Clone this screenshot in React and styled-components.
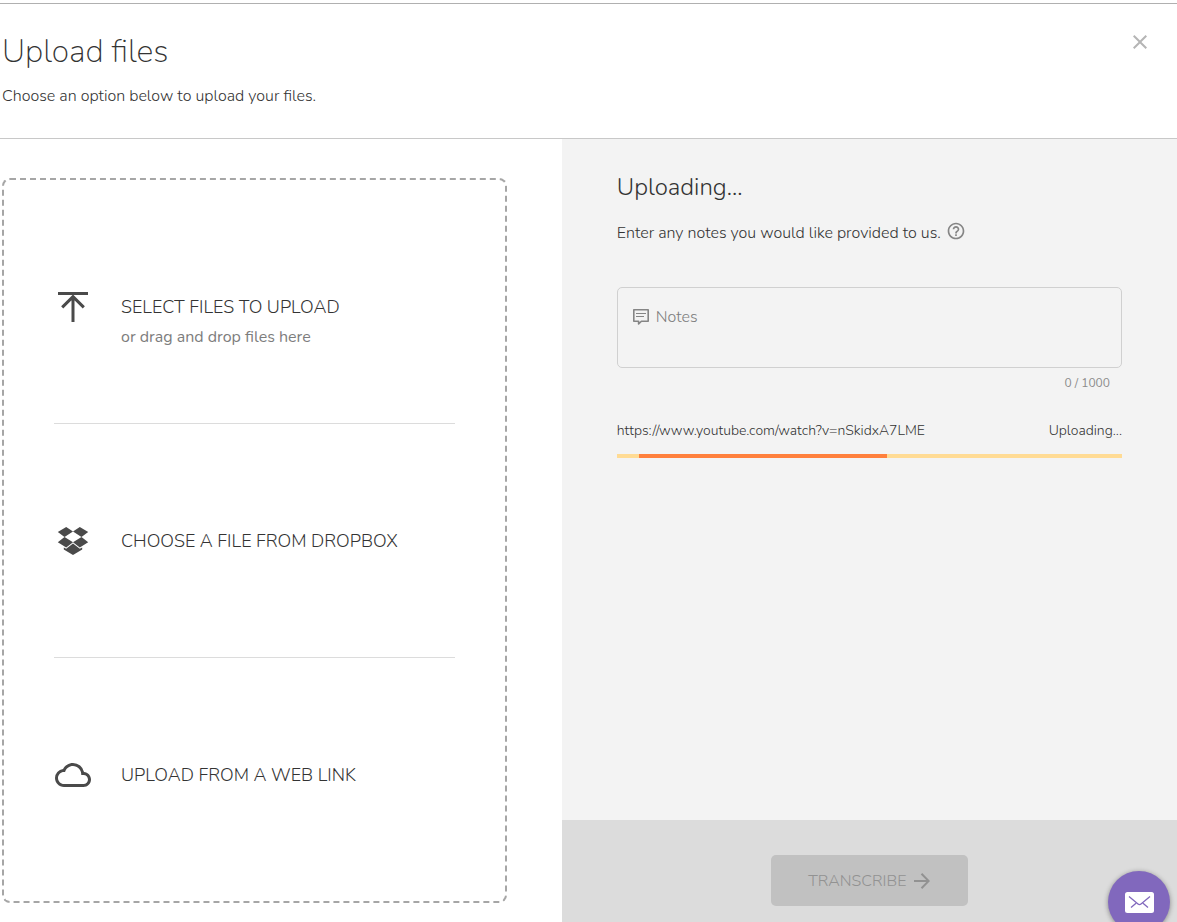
import React, { useState } from "react";
import styled, { createGlobalStyle } from "styled-components";
import { MdClose, MdHelpOutline, MdCloudQueue } from "react-icons/md";

const colors = {
    text: "#333333",
    muted: "#7d7d7d",
    icon: "#4a4a4a",
    line: "#c8c8c8",
    panel: "#f3f3f3",
    footer: "#dcdcdc",
    disabled: "#c1c1c1",
    disabledText: "#929292",
    track: "#ffdb94",
    bar: "#ff803c",
    chat: "#8168bd",
};

const MAX_NOTES = 1000;

const GlobalStyle = createGlobalStyle`
    *, *::before, *::after {
        box-sizing: border-box;
    }

    body {
        margin: 0;
        background: #ffffff;
        color: ${colors.text};
        font-family: Nunito, Lato, "Open Sans", sans-serif;
        font-size: 16px;
        font-weight: 300;
        line-height: 24px;
    }

    button, textarea {
        font: inherit;
        color: inherit;
    }

    svg {
        display: block;
        flex: none;
    }
`;

const Page = styled.div`
    display: flex;
    flex-direction: column;
    min-height: 100vh;
    padding-top: 3px;
`;

const Header = styled.header`
    display: flex;
    justify-content: space-between;
    align-items: flex-start;
    padding: 24px 25px 30px 2px;
    border-top: 1px solid #b0b0b0;
    border-bottom: 1px solid ${colors.line};
`;

const Title = styled.h1`
    margin: 0 0 8px;
    font-size: 32px;
    font-weight: 200;
    line-height: 48px;
`;

const Text = styled.p`
    margin: 0;
`;

const IconButton = styled.button`
    display: flex;
    padding: 0;
    border: 0;
    background: none;
    color: ${(props) => props.$color};
    cursor: pointer;
`;

const CloseButton = styled(IconButton)`
    margin-top: 2px;
`;

const Columns = styled.main`
    flex: 1;
    display: grid;
    grid-template-columns: minmax(0, 21fr) minmax(0, 23fr);
`;

const Sources = styled.section`
    display: flex;
    padding: 39px 55px 19px 2px;
`;

const DropZone = styled.div`
    flex: 1;
    display: flex;
    flex-direction: column;
    padding: 10px 50px;
    border: 2px dashed #a6a6a6;
    border-radius: 8px;
`;

const Option = styled.button`
    flex: 1 1 0;
    display: grid;
    grid-template-columns: 38px 1fr;
    grid-template-rows: 1fr auto 1fr;
    column-gap: 29px;
    padding: 0;
    border: 0;
    border-bottom: 1px solid #dcdcdc;
    background: none;
    text-align: left;
    cursor: pointer;

    &:last-child {
        border-bottom: 0;
    }
`;

const OptionIcon = styled.span`
    grid-row: 2;
    display: flex;
    align-items: center;
    justify-content: center;
    height: 36px;
    color: ${colors.icon};
`;

const OptionTitle = styled.span`
    grid-row: 2;
    align-self: center;
    font-size: 18px;
    text-transform: uppercase;
`;

const OptionHint = styled.span`
    grid-area: 3 / 2;
    color: ${colors.muted};
    font-weight: 400;
`;

const Panel = styled.section`
    display: flex;
    flex-direction: column;
    background: ${colors.panel};
`;

const PanelBody = styled.div`
    flex: 1;
    padding: 32px 55px;
`;

const PanelTitle = styled.h2`
    margin: 0 0 18px;
    font-size: 24px;
    font-weight: 300;
    line-height: 32px;
`;

const NotesIntro = styled.div`
    display: flex;
    align-items: flex-start;
    gap: 5px;
    margin-bottom: 42px;
`;

const NotesBox = styled.label`
    display: flex;
    gap: 6px;
    height: 81px;
    padding: 17px 14px;
    border: 1px solid #d0d0d0;
    border-radius: 5px;
    color: #858585;

    & svg {
        margin-top: 3px;
    }
`;

const NotesInput = styled.textarea`
    flex: 1;
    padding: 0;
    border: 0;
    outline: 0;
    background: none;
    color: ${colors.text};
    resize: none;

    &::placeholder {
        color: ${colors.muted};
        opacity: 1;
    }
`;

const Counter = styled.div`
    padding: 5px 12px 0 0;
    color: #8a8a8a;
    font-size: 12px;
    font-weight: 400;
    line-height: 20px;
    text-align: right;
`;

const UploadRow = styled.div`
    display: flex;
    justify-content: space-between;
    margin-top: 26px;
    font-size: 14px;
`;

const Track = styled.div`
    height: 4px;
    margin-top: 11px;
    background: ${colors.track};
`;

const Bar = styled.div`
    height: 100%;
    background: ${colors.bar};
`;

const Footer = styled.footer`
    display: flex;
    justify-content: center;
    padding: 35px 55px 16px;
    background: ${colors.footer};
`;

const SubmitButton = styled.button`
    display: flex;
    align-items: center;
    justify-content: center;
    gap: 8px;
    width: 197px;
    height: 51px;
    border: 0;
    border-radius: 5px;
    background: ${colors.disabled};
    color: ${colors.disabledText};
    text-transform: uppercase;
`;

const ChatButton = styled.button`
    position: fixed;
    right: 7px;
    bottom: -11px;
    display: flex;
    align-items: center;
    justify-content: center;
    width: 62px;
    height: 62px;
    padding: 0;
    border: 0;
    border-radius: 50%;
    background: ${colors.chat};
    box-shadow: 0 1px 5px rgba(0, 0, 0, 0.4);
    cursor: pointer;
`;

const UploadIcon = () => (
    <svg width="36" height="36" viewBox="0 0 36 36" fill="none" stroke="currentColor" strokeWidth="3">
        <path d="M3 4.5h30M18 33V8M7.2 18.4 18 7.6l10.8 10.8" />
    </svg>
);

const DropboxIcon = () => (
    <svg width="32" height="30" viewBox="0 0 32 30" fill="currentColor">
        <path d="M9.2 1 16 5.6 7.5 11 .8 6.1zM22.8 1 16 5.6l8.5 5.4 6.7-4.9z" />
        <path d="M7.5 11 16 16.2l-6.8 5.3L.8 16.2zM24.5 11 16 16.2l6.8 5.3 8.4-5.3z" />
        <path d="m16 17.6 6.8 5.2 2.4-1.4v2.2L16 29l-9.2-5.4v-2.2l2.4 1.4z" />
    </svg>
);

const NotesIcon = () => (
    <svg width="18" height="18" viewBox="0 0 18 18" fill="none" stroke="currentColor">
        <path d="M1.8 1.8h14.4v11.4H9.4L6.6 16v-2.8H1.8z" strokeWidth="1.6" strokeLinejoin="round" />
        <path d="M4 5.5h10M4 8.5h8" strokeWidth="1.2" />
    </svg>
);

const ArrowIcon = () => (
    <svg width="16" height="16" viewBox="0 0 16 16" fill="none" stroke="currentColor" strokeWidth="2">
        <path d="M0 8h15M7.5.8 14.7 8l-7.2 7.2" />
    </svg>
);

const MailIcon = () => (
    <svg width="29" height="21" viewBox="0 0 29 21" fill="none">
        <rect width="29" height="21" rx="2.5" fill="#ffffff" />
        <path
            d="M4 4.5 13 12q1.5 1.2 3 0l9-7.5M6 15.5l5-4.2M23 15.5l-5-4.2"
            stroke={colors.chat}
            strokeWidth="1.3"
        />
    </svg>
);

const options = [
    {
        key: "files",
        icon: <UploadIcon />,
        label: "Select files to upload",
        hint: "or drag and drop files here",
    },
    {
        key: "dropbox",
        icon: <DropboxIcon />,
        label: "Choose a file from Dropbox",
    },
    {
        key: "link",
        icon: <MdCloudQueue size={36} />,
        label: "Upload from a web link",
    },
];

const upload = {
    name: "https://www.youtube.com/watch?v=nSkidxA7LME",
    start: 4.4,
    length: 49,
};

const App = () => {
    const [notes, setNotes] = useState("");

    return (
        <Page>
            <GlobalStyle />
            <Header>
                <div>
                    <Title>Upload files</Title>
                    <Text>Choose an option below to upload your files.</Text>
                </div>
                <CloseButton type="button" aria-label="Close" $color="#b5b5b5">
                    <MdClose size={24} />
                </CloseButton>
            </Header>
            <Columns>
                <Sources>
                    <DropZone>
                        {options.map((item) => (
                            <Option type="button" key={item.key}>
                                <OptionIcon>{item.icon}</OptionIcon>
                                <OptionTitle>{item.label}</OptionTitle>
                                {item.hint && <OptionHint>{item.hint}</OptionHint>}
                            </Option>
                        ))}
                    </DropZone>
                </Sources>
                <Panel>
                    <PanelBody>
                        <PanelTitle>Uploading...</PanelTitle>
                        <NotesIntro>
                            <Text>Enter any notes you would like provided to us.</Text>
                            <IconButton type="button" aria-label="Help" $color="#858585">
                                <MdHelpOutline size={20} />
                            </IconButton>
                        </NotesIntro>
                        <NotesBox>
                            <NotesIcon />
                            <NotesInput
                                aria-label="Notes"
                                placeholder="Notes"
                                maxLength={MAX_NOTES}
                                value={notes}
                                onChange={(e) => setNotes(e.target.value)}
                            />
                        </NotesBox>
                        <Counter>
                            {notes.length} / {MAX_NOTES}
                        </Counter>
                        <UploadRow>
                            <span>{upload.name}</span>
                            <span>Uploading...</span>
                        </UploadRow>
                        <Track role="progressbar" aria-label="Upload progress">
                            <Bar
                                style={{
                                    marginLeft: `${upload.start}%`,
                                    width: `${upload.length}%`,
                                }}
                            />
                        </Track>
                    </PanelBody>
                    <Footer>
                        <SubmitButton type="button" disabled>
                            Transcribe
                            <ArrowIcon />
                        </SubmitButton>
                    </Footer>
                </Panel>
            </Columns>
            <ChatButton type="button" aria-label="Contact us">
                <MailIcon />
            </ChatButton>
        </Page>
    );
};

export default App;
